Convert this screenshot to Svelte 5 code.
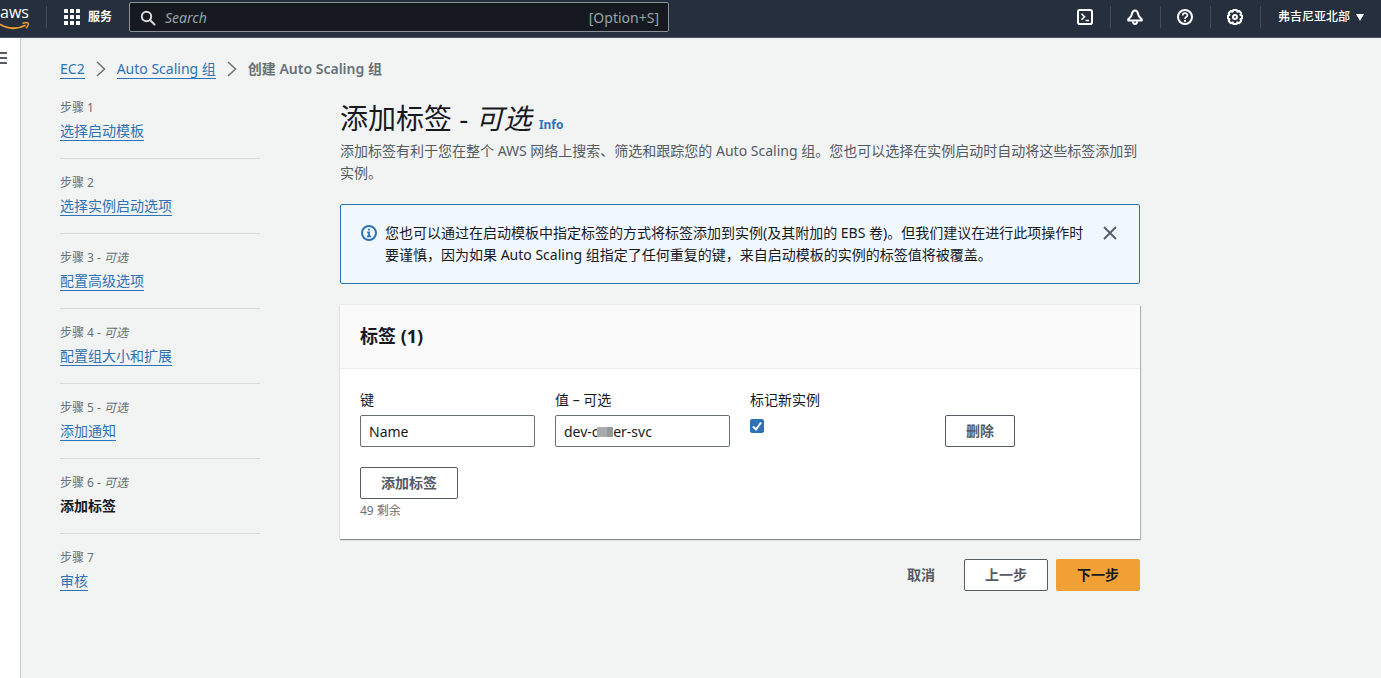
<script>
  const steps = [
    { no: 1, title: '选择启动模板' },
    { no: 2, title: '选择实例启动选项' },
    { no: 3, title: '配置高级选项', optional: true },
    { no: 4, title: '配置组大小和扩展', optional: true },
    { no: 5, title: '添加通知', optional: true },
    { no: 6, title: '添加标签', optional: true, current: true },
    { no: 7, title: '审核' }
  ];
  let key = $state('Name');
  let value = $state('dev-c\u00a0\u00a0\u00a0\u00a0er-svc');
  let tagNew = $state(true);
</script>

<div class="page">
  <header class="topbar">
    <a class="logo" href="#home" aria-label="aws">
      <span>aws</span>
      <svg width="30" height="8" viewBox="0 0 30 8">
        <path d="M0 2.200C8 7.500 18 7.300 25.600 3.300" fill="none" stroke="#f29d2e" stroke-width="1.800" />
        <path d="M22.600 1.500c2-.8 4.600-1 5.400-.4.6.9-.2 3.300-2 5.200" fill="none" stroke="#f29d2e" stroke-width="1.500" />
      </svg>
    </a>
    <span class="sep"></span>
    <button class="services">
      <svg width="16" height="16" viewBox="0 0 16 16" fill="#fff">
        {#each [0, 6, 12] as y}
          {#each [0, 6, 12] as x}
            <rect {x} {y} width="4" height="4" rx=".5" />
          {/each}
        {/each}
      </svg>
      服务
    </button>
    <label class="search">
      <svg width="16" height="16" viewBox="0 0 16 16" fill="none" stroke="#d5dbdb" stroke-width="2">
        <circle cx="6.500" cy="6.500" r="4.700" />
        <path d="M10 10l4.500 4.500" stroke-linecap="round" />
      </svg>
      <input type="search" placeholder="Search" aria-label="Search" />
      <span>[Option+S]</span>
    </label>
    <nav class="tools">
      <button aria-label="CloudShell">
        <svg viewBox="0 0 16 16"><rect x="1" y="1" width="14" height="14" rx="1.800" /><path d="M4.500 4.800l3 3-3 3M8.500 11.500h3.500" stroke-width="1.600" /></svg>
      </button>
      <button aria-label="通知">
        <svg viewBox="0 0 16 16"><path d="M8 1.500C6 1.500 5.200 3.200 4.900 5.200 4.600 7.600 3 8.600 1.200 10.200v1.300h13.600v-1.300C13 8.600 11.400 7.600 11.100 5.200 10.800 3.200 10 1.500 8 1.500z" stroke-linejoin="round" /><path d="M5.800 12.200c.2 3.600 4.200 3.600 4.400 0" /></svg>
      </button>
      <button aria-label="帮助">
        <svg viewBox="0 0 16 16"><circle cx="8" cy="8" r="7" /><path d="M5.700 6.400C5.700 3.400 10.400 3.500 10.400 6.200 10.400 7.900 8 7.800 8 10" stroke-width="1.700" /><path d="M8 11v1.800" /></svg>
      </button>
      <button aria-label="设置">
        <svg viewBox="0 0 16 16"><path d="M6.300 1h3.400l.6 1.700 1.900-.8 2 2.300-.8 1.600 1.600.8v2.900l-1.600.7.8 1.800-2.100 2.200-1.800-.8L9.700 15H6.300l-.6-1.600-1.900.8-2.100-2.200.8-1.800L1 9.500V6.600l1.500-.8-.8-1.600 2.100-2.300 1.900.8z" stroke-linejoin="round" /><circle cx="8" cy="8" r="2" /></svg>
      </button>
      <button class="region">
        弗吉尼亚北部
        <svg class="caret" viewBox="0 0 8 7"><path d="M0 0h8L4 7z" /></svg>
      </button>
    </nav>
  </header>

  <div class="body">
    <aside class="rail">
      <button aria-label="菜单"><i></i><i></i><i></i></button>
    </aside>
    <main>
      <nav class="crumbs">
        <a href="#ec2">EC2</a>
        <svg width="10" height="16" viewBox="0 0 10 16"><path d="M1 1L8.500 8 1 15" /></svg>
        <a href="#asg">Auto Scaling 组</a>
        <svg width="10" height="16" viewBox="0 0 10 16"><path d="M1 1L8.500 8 1 15" /></svg>
        <b>创建 Auto Scaling 组</b>
      </nav>

      <div class="columns">
        <ol class="steps">
          {#each steps as s}
            <li>
              <small>步骤 {s.no}{#if s.optional}{' - '}<em>可选</em>{/if}</small>
              <div class="title">
                {#if s.current}<b>{s.title}</b>{:else}<a href="#step{s.no}">{s.title}</a>{/if}
              </div>
            </li>
          {/each}
        </ol>

        <section class="content">
          <h1>添加标签 - <em>可选</em> <a href="#info">Info</a></h1>
          <p class="desc">添加标签有利于您在整个 AWS 网络上搜索、筛选和跟踪您的 Auto Scaling 组。您也可以选择在实例启动时自动将这些标签添加到实例。</p>

          <div class="alert" role="note">
            <svg class="info" width="16" height="16" viewBox="0 0 16 16" fill="none" stroke="#2e73b8" stroke-width="2">
              <circle cx="8" cy="8" r="7" />
              <path d="M8 3.800v1.800M6.200 7.500H8V11M6 11.300h4" stroke-width="1.800" />
            </svg>
            <p>您也可以通过在启动模板中指定标签的方式将标签添加到实例(及其附加的 EBS 卷)。但我们建议在进行此项操作时要谨慎，因为如果 Auto Scaling 组指定了任何重复的键，来自启动模板的实例的标签值将被覆盖。</p>
            <button aria-label="关闭">
              <svg width="14" height="14" viewBox="0 0 14 14" fill="none" stroke="#545b64" stroke-width="1.800"><path d="M1 1l12 12M13 1L1 13" /></svg>
            </button>
          </div>

          <div class="card">
            <h2>标签 (1)</h2>
            <div class="card-body">
              <div class="fields">
                <div>
                  <label for="key">键</label>
                  <input id="key" type="text" bind:value={key} />
                </div>
                <div>
                  <label for="value">值 – 可选</label>
                  <div class="masked">
                    <input id="value" type="text" bind:value />
                    <span class="mask"></span>
                  </div>
                </div>
                <div>
                  <label for="tag-new">标记新实例</label>
                  <input id="tag-new" type="checkbox" bind:checked={tagNew} />
                </div>
                <div class="remove"><button class="btn">删除</button></div>
              </div>
              <button class="btn">添加标签</button>
              <p class="hint">49 剩余</p>
            </div>
          </div>

          <div class="actions">
            <button class="btn link">取消</button>
            <button class="btn">上一步</button>
            <button class="btn primary">下一步</button>
          </div>
        </section>
      </div>
    </main>
  </div>
</div>

<style>
  :global(body) {
    margin: 0;
    background: #f2f3f3;
  }
  .page {
    min-height: 100vh;
    display: flex;
    flex-direction: column;
    font: 14px/22px 'Noto Sans', 'Noto Sans CJK SC', sans-serif;
    color: #16191f;
  }
  .page * {
    box-sizing: border-box;
  }
  button,
  input {
    font: inherit;
    color: inherit;
  }
  button {
    background: none;
    border: 0;
    padding: 0;
    cursor: pointer;
  }
  svg {
    display: block;
    flex: none;
  }
  a {
    color: #2e73b8;
    text-decoration: none;
  }
  p,
  h1,
  h2 {
    margin: 0;
  }

  .topbar {
    height: 38px;
    display: flex;
    align-items: center;
    background: #252f3e;
    border-bottom: 1px solid #4a525e;
    padding-bottom: 3px;
    color: #fff;
  }
  .logo {
    width: 30px;
    color: #fff;
  }
  .logo span {
    display: block;
    font: 500 16px/16px 'Open Sans', sans-serif;
    margin-bottom: 2px;
  }
  .sep {
    width: 1px;
    height: 22px;
    margin: 0 17px 0 16px;
    background: #414b59;
  }
  .services {
    display: flex;
    align-items: center;
    gap: 8px;
    font-size: 12px;
    font-weight: 600;
  }
  .search {
    display: flex;
    align-items: center;
    width: 540px;
    height: 30px;
    margin-left: 17px;
    padding: 1px 9px 0 10px;
    gap: 9px;
    background: #161a20;
    border: 1px solid #879196;
    border-radius: 2px;
    color: #95a5a6;
  }
  .search input {
    flex: 1;
    min-width: 0;
    padding: 0;
    border: 0;
    outline: 0;
    background: none;
    font-style: italic;
  }
  .search input::placeholder {
    color: #95a5a6;
  }
  .tools {
    display: flex;
    margin-left: auto;
  }
  .tools button {
    width: 50px;
    height: 22px;
    display: flex;
    align-items: center;
    justify-content: center;
    border-right: 1px solid #414b59;
  }
  .tools svg {
    width: 16px;
    height: 16px;
    fill: none;
    stroke: #fff;
    stroke-width: 2;
  }
  .tools .region {
    width: auto;
    gap: 6px;
    padding: 0 17px;
    border: 0;
    font-size: 12px;
    font-weight: 500;
  }
  .tools .caret {
    width: 8px;
    height: 7px;
    fill: #fff;
    stroke: none;
  }

  .body {
    flex: 1;
    display: flex;
  }
  .rail {
    width: 21px;
    background: #fff;
    border-right: 1px solid #c8cdce;
    padding-top: 14px;
  }
  .rail button {
    width: 7px;
    display: grid;
    gap: 3px;
  }
  .rail i {
    height: 2px;
    background: #545b64;
  }
  main {
    flex: 1;
    padding: 20px 39px;
  }
  .crumbs {
    display: flex;
    align-items: center;
    gap: 11px;
    color: #687078;
  }
  .crumbs b {
    font-weight: 600;
  }
  .crumbs svg {
    fill: none;
    stroke: #687078;
    stroke-width: 1.500;
  }
  .crumbs a,
  .title a {
    line-height: 18px;
    border-bottom: 1px solid #2e73b8;
  }
  .title a {
    display: inline-block;
  }
  .columns {
    display: grid;
    grid-template-columns: 200px minmax(0, 800px);
    gap: 80px;
    margin-top: 4px;
  }
  .steps {
    list-style: none;
    margin: 0;
    padding: 0;
  }
  .steps li {
    padding: 16px 0;
    border-bottom: 1px solid #d5dbdb;
  }
  .steps li:last-child {
    border: 0;
  }
  .steps small {
    display: block;
    font-size: 12px;
    line-height: 16px;
    color: #687078;
    margin-bottom: 4px;
  }
  .title {
    height: 22px;
  }

  .content {
    padding-top: 16px;
  }
  h1 {
    font-size: 28px;
    line-height: 36px;
    font-weight: 400;
    margin-bottom: 4px;
  }
  h1 a {
    font-size: 12px;
    line-height: 16px;
    font-weight: 700;
  }
  .desc {
    color: #545b64;
  }
  .alert {
    display: flex;
    margin: 20px 0 21px;
    padding: 17px 22px 17px 20px;
    background: #f1f8ff;
    border: 1px solid #2e73b8;
    border-radius: 2px;
  }
  .alert p {
    flex: 1;
    margin: 0 19px 0 8px;
  }
  .alert svg {
    margin-top: 3px;
  }
  .alert button {
    align-self: flex-start;
    padding-top: 1px;
  }
  .card {
    background: #fff;
    box-shadow: 0 1px 1px 0 #0004, 1px 1px 1px 0 #0003, 0 0 1px 0 #0003;
  }
  h2 {
    padding: 19px 20px 20px;
    font-size: 18px;
    line-height: 24px;
    font-weight: 700;
    background: #fafafa;
    border-bottom: 1px solid #eaeded;
  }
  .card-body {
    padding: 20px;
  }
  .fields {
    display: grid;
    grid-template-columns: repeat(4, minmax(0, 1fr));
    gap: 20px;
    margin-bottom: 20px;
  }
  .fields label {
    display: block;
    margin-bottom: 4px;
  }
  input[type='text'] {
    display: block;
    width: 100%;
    height: 32px;
    padding: 1px 8px 0;
    border: 1px solid #687078;
    border-radius: 2px;
    background: #fff;
  }
  input[type='checkbox'] {
    appearance: none;
    display: block;
    width: 14px;
    height: 14px;
    margin: 8px 0 0;
    border: 1px solid #2e73b8;
    border-radius: 2px;
  }
  input[type='checkbox']:checked {
    background: #2e73b8 url("data:image/svg+xml,%3Csvg xmlns='http://www.w3.org/2000/svg' viewBox='0 0 12 12'%3E%3Cpath d='M2 6.500l3 3L10 2.500' fill='none' stroke='white' stroke-width='2'/%3E%3C/svg%3E") center / 12px no-repeat;
  }
  .masked {
    position: relative;
  }
  .mask {
    position: absolute;
    left: 42px;
    top: 12px;
    width: 16px;
    height: 10px;
    background: linear-gradient(90deg, #a9abad 60%, #979a9d 60%);
  }
  .remove {
    padding-top: 26px;
  }
  .btn {
    display: block;
    height: 32px;
    padding: 0 20px;
    border: 1px solid #545b64;
    border-radius: 2px;
    background: #fff;
    color: #545b64;
    font-weight: 700;
  }
  .hint {
    margin-top: 4px;
    font-size: 12px;
    line-height: 16px;
    color: #687078;
  }
  .actions {
    display: flex;
    justify-content: flex-end;
    gap: 8px;
    margin-top: 20px;
  }
  .btn.link {
    background: none;
    border-color: transparent;
  }
  .btn.primary {
    background: #f0a035;
    border-color: #f0a035;
    color: #16191f;
  }
</style>
